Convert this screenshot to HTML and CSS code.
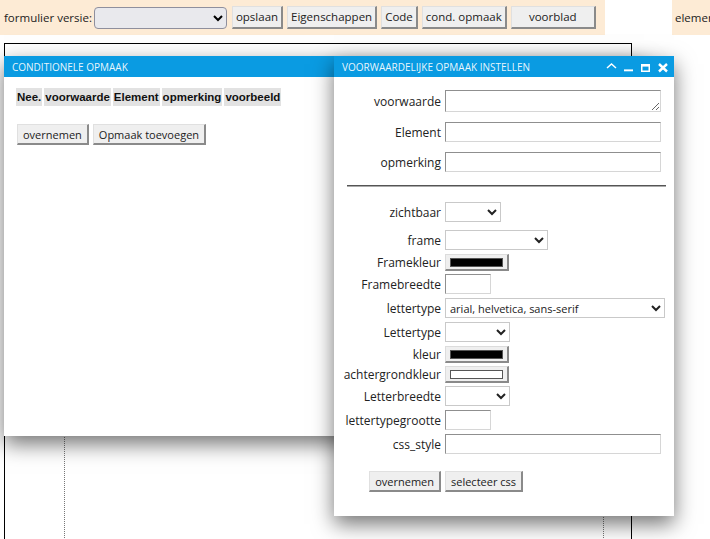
FILE: index.html
```html
<!DOCTYPE html>
<html lang="nl">
<head>
<meta charset="utf-8">
<title>Formulier</title>
<link rel="stylesheet" href="styles.css">
</head>
<body>
<header class="topbar">
  <div class="toolbar">
    <label class="tb-label">formulier versie:</label>
    <select class="tb-select"><option></option></select>
    <button class="btn btn-top">opslaan</button>
    <button class="btn btn-top">Eigenschappen</button>
    <button class="btn btn-top">Code</button>
    <button class="btn btn-top">cond. opmaak</button>
    <button class="btn btn-top btn-wide">voorblad</button>
  </div>
  <div class="toolbar2">elementen</div>
</header>

<main class="canvas"><div class="canvas-inner"></div></main>

<section class="dialog dlg1">
  <div class="titlebar"><span>Conditionele opmaak</span></div>
  <div class="dlg1-body">
    <table class="cond-table">
      <thead>
        <tr><th>Nee.</th><th>voorwaarde</th><th>Element</th><th>opmerking</th><th>voorbeeld</th></tr>
      </thead>
    </table>
    <div class="actions">
      <button class="btn">overnemen</button>
      <button class="btn">Opmaak toevoegen</button>
    </div>
  </div>
</section>

<section class="dialog dlg2">
  <div class="titlebar">
    <span>Voorwaardelijke opmaak instellen</span>
    <svg class="win-icons" width="62" height="21" viewBox="0 0 62 21">
      <path d="M1 12 L5.5 8 L10 12" stroke="#fff" stroke-width="1.5" fill="none"/>
      <rect x="18" y="13.4" width="9" height="1.9" fill="#fff"/>
      <rect x="35.75" y="8.75" width="7.5" height="6.5" stroke="#fff" stroke-width="1.5" fill="none"/>
      <rect x="35" y="8" width="9" height="2.6" fill="#fff"/>
      <path d="M53 8 L61 15.5 M61 8 L53 15.5" stroke="#fff" stroke-width="2.4" fill="none"/>
    </svg>
  </div>
  <div class="form">
    <div class="fields-top">
      <div class="row"><label class="lbl">voorwaarde</label><textarea class="field field-xl ta"></textarea></div>
      <div class="row"><label class="lbl">Element</label><input class="field field-xl" type="text"></div>
      <div class="row"><label class="lbl">opmerking</label><input class="field field-xl" type="text"></div>
    </div>
    <hr class="sep">
    <div class="fields">
      <div class="row row-spaced"><label class="lbl">zichtbaar</label><select class="sel sel-s"><option></option></select></div>
      <div class="row"><label class="lbl">frame</label><select class="sel sel-m"><option></option></select></div>
      <div class="row row-color"><label class="lbl">Framekleur</label><button class="color"><span class="swatch"></span></button></div>
      <div class="row"><label class="lbl">Framebreedte</label><input class="field field-num" type="text"></div>
      <div class="row"><label class="lbl">lettertype</label><select class="sel sel-l"><option>arial, helvetica, sans-serif</option></select></div>
      <div class="row"><label class="lbl">Lettertype</label><select class="sel sel-n"><option></option></select></div>
      <div class="row row-color"><label class="lbl">kleur</label><button class="color"><span class="swatch"></span></button></div>
      <div class="row row-color"><label class="lbl">achtergrondkleur</label><button class="color"><span class="swatch swatch-white"></span></button></div>
      <div class="row"><label class="lbl">Letterbreedte</label><select class="sel sel-n"><option></option></select></div>
      <div class="row"><label class="lbl">lettertypegrootte</label><input class="field field-num" type="text"></div>
      <div class="row"><label class="lbl">css_style</label><input class="field field-xl" type="text"></div>
    </div>
    <div class="row form-actions">
      <span class="lbl"><button class="btn">overnemen</button></span>
      <button class="btn">selecteer css</button>
    </div>
  </div>
</section>
</body>
</html>
```

FILE: styles.css
```css
* { box-sizing: border-box; }

html, body {
  margin: 0;
  padding: 0;
  background: #fff;
}

body {
  position: relative;
  width: 710px;
  height: 539px;
  overflow: hidden;
  font-family: "Open Sans", "Noto Sans", sans-serif;
  font-size: 12px;
  color: #222;
}

/* ---------- top toolbar ---------- */
.topbar {
  display: flex;
  height: 35px;
}

.toolbar {
  width: 605px;
  flex: none;
  background: #fdebd5;
  display: flex;
  align-items: center;
  padding-left: 4px;
  white-space: nowrap;
  font-size: 11.5px;
}

.toolbar > * { flex: none; }

.tb-label { margin-right: 2px; }

.tb-select {
  width: 133px;
  height: 22px;
  margin-right: 5px;
  background: #e9e9ed;
  border: 1px solid #8f8f9d;
  border-radius: 4px;
  font: inherit;
}

.btn {
  font: inherit;
  font-size: 11px;
  color: #222;
  height: 21px;
  padding: 0 5px;
  background: #efefef;
  border-style: solid;
  border-width: 1px 2px 2px 1px;
  border-color: #e0e0e0 #8a8a8a #8a8a8a #e0e0e0;
  border-radius: 0;
  line-height: 1;
  white-space: nowrap;
}

.btn-top {
  height: 23px;
  font-size: 11.5px;
  padding: 0 3px;
  margin-right: 4px;
}

.btn-wide { width: 85px; }

.toolbar2 {
  margin-left: 67px;
  flex: 1;
  background: #fdebd5;
  display: flex;
  align-items: center;
  padding-left: 3px;
  white-space: nowrap;
  overflow: hidden;
  font-size: 11.5px;
}

/* ---------- design canvas ---------- */
.canvas {
  margin: 8px 0 0 4px;
  width: 628px;
  height: 520px;
  border: 1px solid #000;
}

.canvas-inner {
  margin: 20px 0 0 59px;
  width: 540px;
  height: 480px;
  border-left: 1px dotted #777;
  border-right: 1px dotted #777;
}

/* ---------- dialogs ---------- */
.dialog {
  position: absolute;
  top: 56px;
  background: #fff;
  box-shadow: 0 8px 20px rgba(0, 0, 0, 0.55);
}

.dlg1 {
  left: 4px;
  width: 640px;
  height: 380px;
}

.dlg2 {
  left: 334px;
  width: 340px;
  height: 460px;
}

.titlebar {
  height: 21px;
  background: #0a9be2;
  color: rgba(255, 255, 255, 0.92);
  font-size: 10px;
  text-transform: uppercase;
  display: flex;
  align-items: center;
  justify-content: space-between;
  padding: 0 6px 0 8px;
}

.win-icons { display: block; }

.dlg1-body { padding: 9px 10px; }

.cond-table {
  border-spacing: 2px;
  font-family: "Liberation Sans", Arial, sans-serif;
  font-size: 11.5px;
  font-weight: bold;
  line-height: 14px;
  color: #111;
}

.cond-table th {
  background: #e2e2e2;
  padding: 2px 1px;
  text-align: left;
}

.actions {
  margin: 16px 0 0 3px;
  display: flex;
  gap: 4px;
}

/* ---------- form ---------- */
.form { padding-top: 13px; }

.row {
  display: flex;
  align-items: center;
  gap: 4px;
}

.lbl {
  width: 107px;
  flex: none;
  text-align: right;
  white-space: nowrap;
}

.fields-top {
  display: flex;
  flex-direction: column;
  gap: 10px;
}

.field {
  height: 20px;
  padding: 1px 3px;
  background: #fff;
  border: 1px solid;
  border-color: #8f8f8f #d6d6d6 #d6d6d6 #8f8f8f;
  font: inherit;
}

.field-xl { width: 216px; }
.field-num { width: 46px; }

.ta {
  height: 22px;
  resize: both;
}

.sep {
  margin: 13px 8px 0 13px;
  height: 0;
  border: 0;
  border-top: 1px solid #555;
  border-bottom: 1px solid #aaa;
}

.fields {
  margin-top: 15px;
  display: flex;
  flex-direction: column;
  gap: 4px;
}

.fields .row { height: 20px; }
.fields .row-color { height: 16px; }
.fields .row-spaced { margin-bottom: 4px; }

.sel {
  height: 20px;
  background: #fff;
  border: 1px solid #c9c9c9;
  border-radius: 0;
  font: inherit;
  font-size: 11px;
  color: #222;
}

.sel-s { width: 56px; }
.sel-m { width: 103px; }
.sel-n { width: 65px; }
.sel-l { width: 220px; }

.color {
  width: 64px;
  height: 17px;
  padding: 3px 4px 2px;
  display: flex;
  background: #efefef;
  border-style: solid;
  border-width: 1px 2px 2px 1px;
  border-color: #dcdcdc #8a8a8a #8a8a8a #dcdcdc;
}

.swatch {
  flex: 1;
  background: #000;
  border: 1px solid #555;
}

.swatch-white { background: #fff; }

.form-actions { margin-top: 17px; }
.form-actions .lbl { display: flex; justify-content: flex-end; }
```
